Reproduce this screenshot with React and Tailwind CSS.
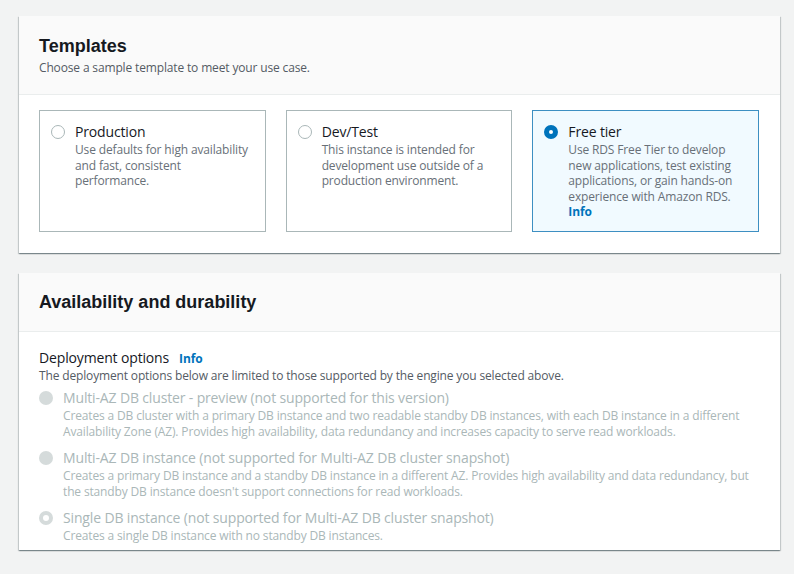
import React, { useState } from "react";

const BODY_FONT = { fontFamily: '"Open Sans", "Noto Sans", Arial, sans-serif' };
const HEAD_FONT = { fontFamily: '"Liberation Sans", Arial, sans-serif' };

const templates = [
  {
    id: "production",
    title: "Production",
    desc: "Use defaults for high availability and fast, consistent performance.",
  },
  {
    id: "devtest",
    title: "Dev/Test",
    desc: "This instance is intended for development use outside of a production environment.",
  },
  {
    id: "free",
    title: "Free tier",
    desc: "Use RDS Free Tier to develop new applications, test existing applications, or gain hands-on experience with Amazon RDS.",
    info: true,
  },
];

const deployments = [
  {
    title: "Multi-AZ DB cluster - preview (not supported for this version)",
    desc: "Creates a DB cluster with a primary DB instance and two readable standby DB instances, with each DB instance in a different Availability Zone (AZ). Provides high availability, data redundancy and increases capacity to serve read workloads.",
  },
  {
    title: "Multi-AZ DB instance (not supported for Multi-AZ DB cluster snapshot)",
    desc: "Creates a primary DB instance and a standby DB instance in a different AZ. Provides high availability and data redundancy, but the standby DB instance doesn't support connections for read workloads.",
  },
  {
    title: "Single DB instance (not supported for Multi-AZ DB cluster snapshot)",
    desc: "Creates a single DB instance with no standby DB instances.",
    checked: true,
  },
];

// Radio circle, selected = thick blue ring
const Radio = ({ selected }) =>
  selected ? (
    <span className="mt-[3px] h-[14px] w-[14px] shrink-0 rounded-full border-[5px] border-[#0073bb] bg-white" />
  ) : (
    <span className="mt-[3px] h-[14px] w-[14px] shrink-0 rounded-full border border-[#aab7b8] bg-white" />
  );

const DisabledRadio = ({ checked }) =>
  checked ? (
    <span className="mt-[3px] h-[14px] w-[14px] shrink-0 rounded-full border-[4px] border-[#d5dbdb] bg-white" />
  ) : (
    <span className="mt-[3px] h-[14px] w-[14px] shrink-0 rounded-full bg-[#d5dbdb]" />
  );

const panelShadow =
  "shadow-[0_1px_1px_0_rgba(0,28,36,0.3),1px_1px_1px_0_rgba(0,28,36,0.15),-1px_1px_1px_0_rgba(0,28,36,0.15)]";

export default function App() {
  const [template, setTemplate] = useState("free");

  return (
    <div
      className="min-h-[574px] bg-[#f2f3f3] pl-[19px] pr-[14px] pt-4 pb-6 tracking-[-0.15px]"
      style={BODY_FONT}
    >
      {/* Templates */}
      <section className={`bg-white ${panelShadow}`}>
        <div className="border-b border-[#eaeded] bg-[#fafafa] px-5 pt-[18px] pb-[18px]">
          <h2
            className="text-[18px] font-bold leading-[24px] tracking-normal text-[#16191f]"
            style={HEAD_FONT}
          >
            Templates
          </h2>
          <p className="mt-[2px] text-[12px] leading-[16px] text-[#545b64]">
            Choose a sample template to meet your use case.
          </p>
        </div>
        <div className="grid grid-cols-3 gap-5 pl-5 pr-[21px] pt-[15px] pb-[21px]">
          {templates.map((t) => {
            const sel = template === t.id;
            return (
              <div
                key={t.id}
                onClick={() => setTemplate(t.id)}
                className={`flex h-[122px] cursor-pointer gap-[10px] border pl-[11px] pr-[8px] pt-[11px] ${
                  sel ? "border-[#3d8fc2] bg-[#f1faff]" : "border-[#aab7b8] bg-white"
                }`}
              >
                <Radio selected={sel} />
                <div>
                  <div className="text-[14px] leading-[20px] text-[#16191f]">{t.title}</div>
                  <div className="text-[12px] leading-[15.5px] text-[#687078]">{t.desc}</div>
                  {t.info && (
                    <div className="text-[12px] font-bold leading-[15.5px] text-[#0073bb]">Info</div>
                  )}
                </div>
              </div>
            );
          })}
        </div>
      </section>

      {/* Availability and durability */}
      <section className={`mt-5 bg-white ${panelShadow}`}>
        <div className="border-b border-[#eaeded] bg-[#fafafa] px-5 py-[16px]">
          <h2
            className="text-[18px] font-bold leading-[26px] tracking-normal text-[#16191f]"
            style={HEAD_FONT}
          >
            Availability and durability
          </h2>
        </div>
        <div className="px-5 pt-[16px] pb-[6px]">
          <div className="flex items-baseline gap-[10px]">
            <span className="text-[14px] leading-[20px] text-[#16191f]">Deployment options</span>
            <span className="text-[12px] font-bold text-[#0073bb]">Info</span>
          </div>
          <p className="text-[12px] leading-[16px] text-[#545b64]">
            The deployment options below are limited to those supported by the engine you selected above.
          </p>
          <div className="mt-[4px] flex flex-col gap-[8px]">
            {deployments.map((d) => (
              <div key={d.title} className="flex gap-[10px]">
                <DisabledRadio checked={d.checked} />
                <div>
                  <div className="text-[14px] leading-[20px] text-[#aab7b8]">{d.title}</div>
                  <div className="text-[12px] leading-[16px] text-[#aab7b8]">{d.desc}</div>
                </div>
              </div>
            ))}
          </div>
        </div>
      </section>
    </div>
  );
}
